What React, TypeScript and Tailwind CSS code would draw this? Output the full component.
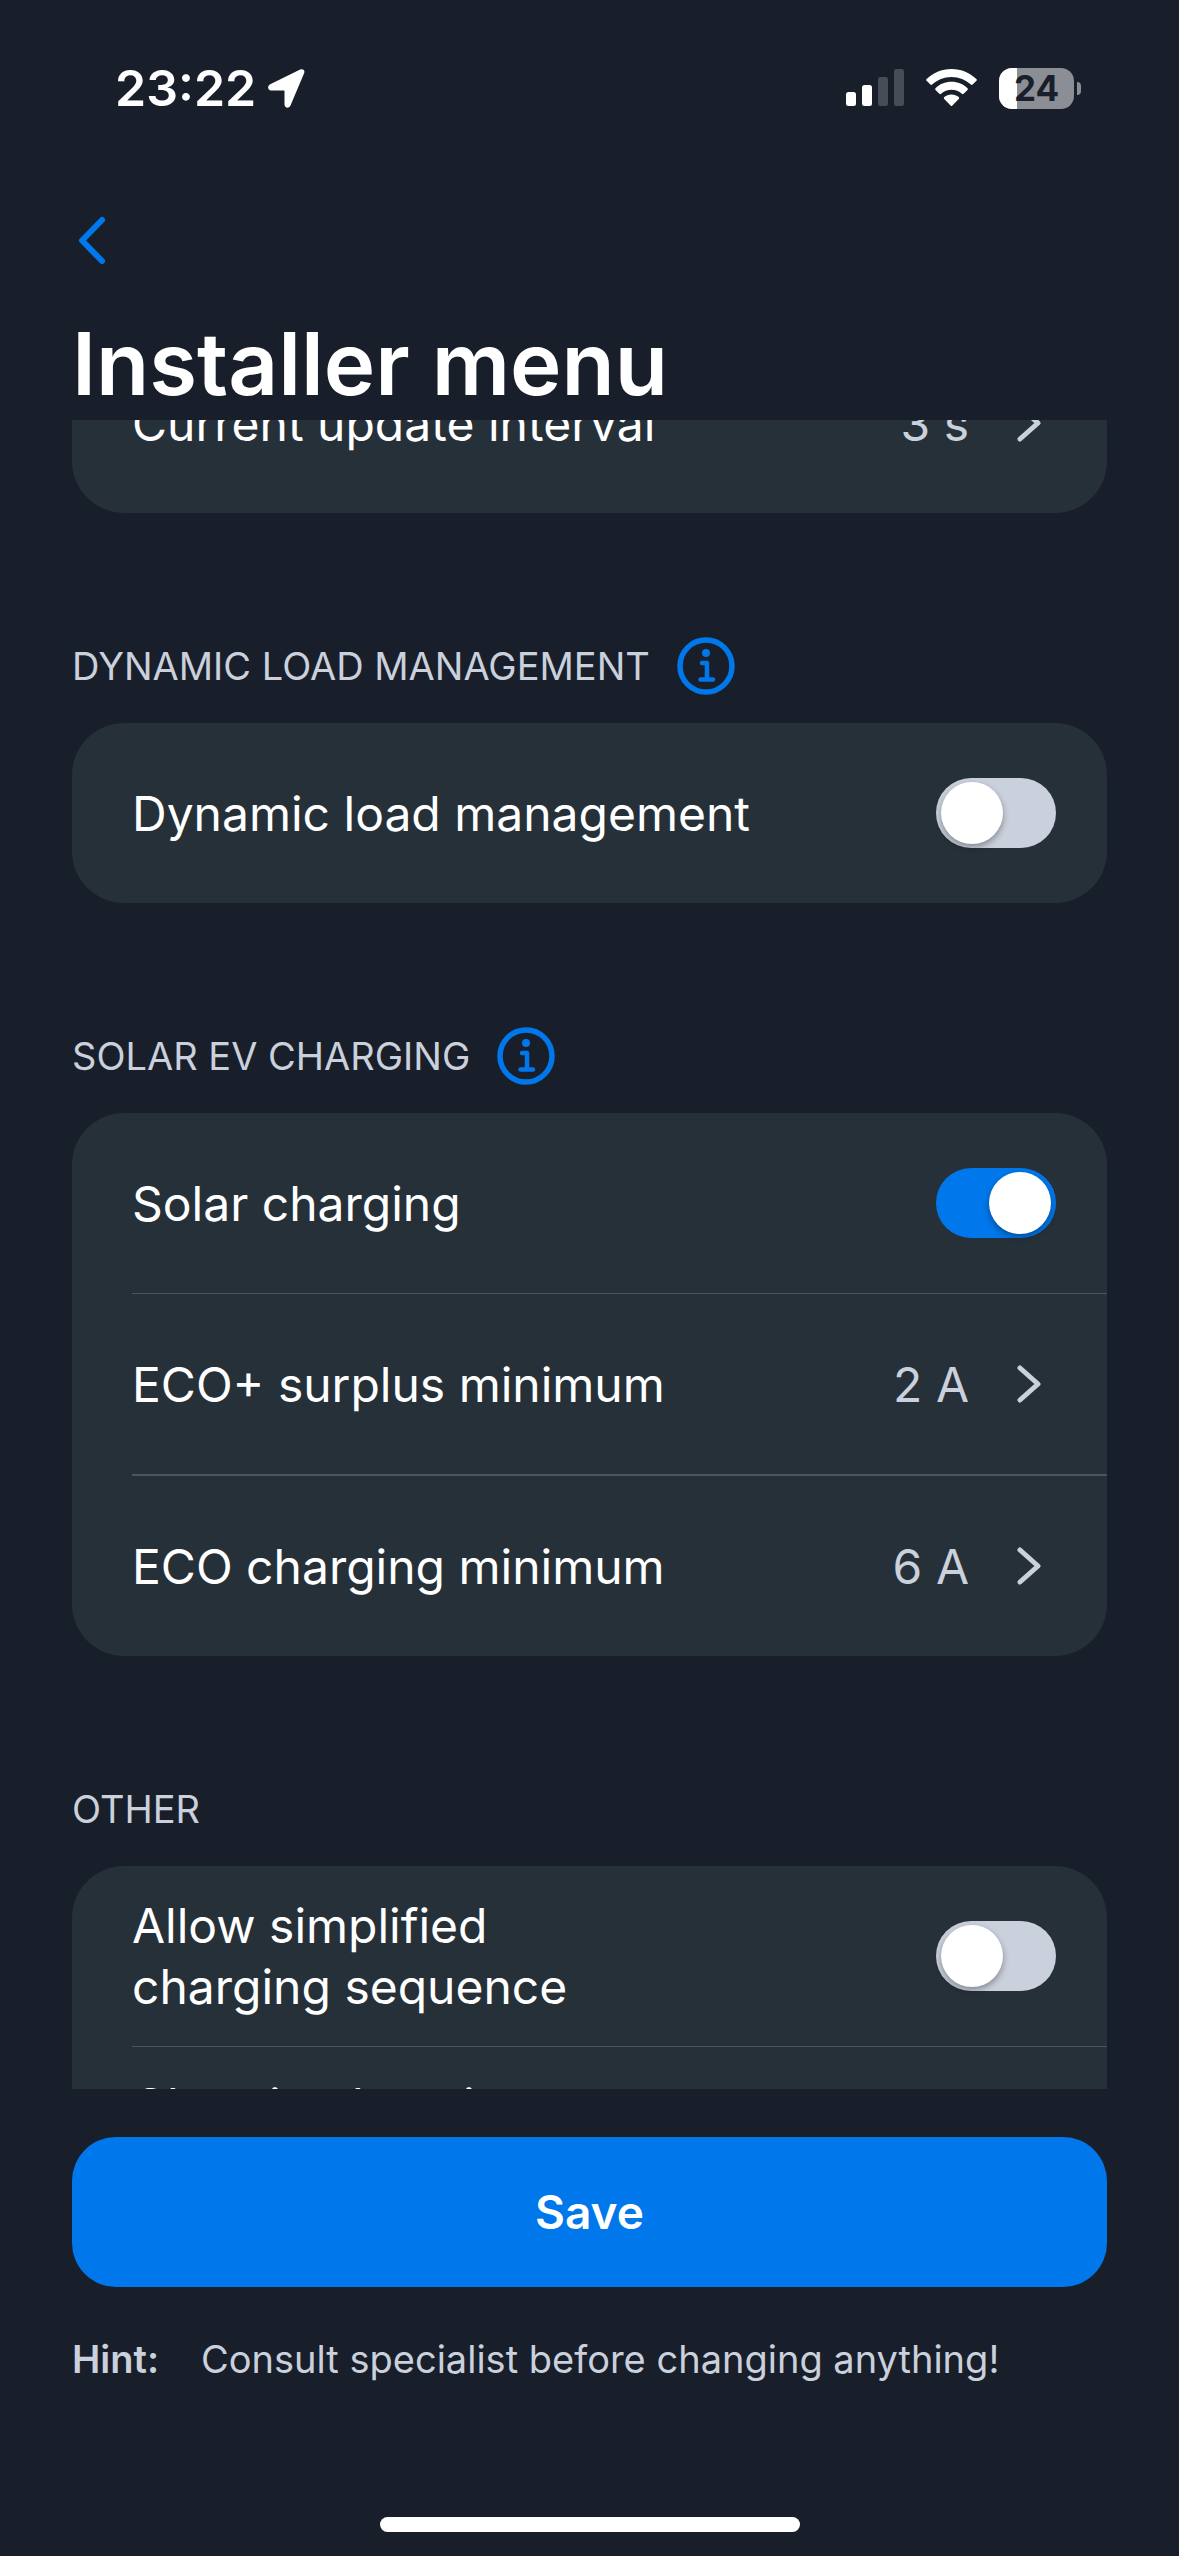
import { useState } from "react";
import type { ReactNode } from "react";

function LocationArrow() {
  return (
    <svg viewBox="0 0 37 39" className="h-[39px] w-[37px] shrink-0" fill="#fff" aria-hidden="true">
      <path d="M2.2 15.3 32.2.5c2.9-1.2 5.1 1 3.9 3.8L22.5 36.6c-1.4 3.3-6 2.6-6-1V22.6c0-.8-.3-1.1-1.1-1.1H3.1C-.3 21.5-1 16.9 2.2 15.3Z" />
    </svg>
  );
}

function SignalBars() {
  return (
    <svg viewBox="0 0 58 38" className="h-[38px] w-[58px] shrink-0" fill="#fff" aria-hidden="true">
      <rect x="0" y="23" width="10" height="14" rx="2.5" />
      <rect x="16" y="16" width="10" height="21" rx="2.5" />
      <rect x="32" y="8" width="10" height="29" rx="2.5" fill="#474d56" />
      <rect x="48" y="0" width="10" height="37" rx="2.5" fill="#474d56" />
    </svg>
  );
}

function WifiIcon() {
  return (
    <svg viewBox="0 0 51 38" className="h-[38px] w-[51px] shrink-0" fill="#fff" aria-hidden="true">
      <path d="M25.5 0C35.4 0 44.2 3.9 50.4 10.1a1.2 1.2 0 0 1 0 1.7L46.6 15.6a1.2 1.2 0 0 1-1.7 0C39.9 10.8 33 7.9 25.5 7.9S11.1 10.8 6.1 15.6a1.2 1.2 0 0 1-1.7 0L.6 11.8a1.2 1.2 0 0 1 0-1.7C6.8 3.9 15.6 0 25.5 0Z" />
      <path d="M25.5 12.8c6.3 0 12 2.4 16 6.4a1.2 1.2 0 0 1 0 1.7l-3.9 3.9a1.2 1.2 0 0 1-1.7 0c-2.8-2.5-6.4-4-10.4-4s-7.6 1.5-10.4 4a1.2 1.2 0 0 1-1.7 0l-3.9-3.9a1.2 1.2 0 0 1 0-1.7c4-4 9.7-6.4 16-6.4Z" />
      <path d="M25.5 25.5c2.8 0 5.2 1 7.2 2.6a1.3 1.3 0 0 1 .1 1.9l-6.4 6.6a1.2 1.2 0 0 1-1.8 0L18.2 30a1.3 1.3 0 0 1 .1-1.9c2-1.6 4.4-2.6 7.2-2.6Z" />
    </svg>
  );
}

function Battery({ level }: { level: number }) {
  return (
    <div className="flex items-center gap-[3px]">
      <div className="relative flex h-[41px] w-[75px] items-center justify-center overflow-hidden rounded-[13px] bg-[#8b8f95]">
        <div className="absolute inset-y-0 left-0 bg-white" style={{ width: `${level}%` }} />
        <span className="relative text-[35px] leading-[41px] font-bold text-[#181f2a]">{level}</span>
      </div>
      <div className="h-[13px] w-1 rounded-r-full bg-[#8b8f95]" />
    </div>
  );
}

function StatusBar() {
  return (
    <div className="flex h-[176px] shrink-0 items-start justify-between pt-[57px] pr-[98px] pl-[115px]">
      <div className="flex items-center gap-3">
        <span className="text-[50px] leading-[62px] font-semibold">23:22</span>
        <LocationArrow />
      </div>
      <div className="flex h-[62px] items-center gap-[22px]">
        <SignalBars />
        <WifiIcon />
        <Battery level={24} />
      </div>
    </div>
  );
}

function InfoIcon() {
  return (
    <svg viewBox="0 0 58 58" className="size-[58px]" fill="none" stroke="#0077eb" aria-hidden="true">
      <circle cx="29" cy="29" r="26" strokeWidth="5.5" />
      <circle cx="29" cy="16" r="4" fill="#0077eb" stroke="none" />
      <path d="M25 26h5v16.5M23.5 42.5h12.5" strokeWidth="4.5" strokeLinecap="round" strokeLinejoin="round" />
    </svg>
  );
}

function SectionHeading({ title, info }: { title: string; info?: boolean }) {
  return (
    <div className="flex items-center gap-[27px] pb-7">
      <h2 className="text-[38px] leading-[58px] text-[#cad0dc]">{title}</h2>
      {info && (
        <button type="button" aria-label={`About ${title.toLowerCase()}`}>
          <InfoIcon />
        </button>
      )}
    </div>
  );
}

function ToggleRow({ id, label, initial = false }: { id: string; label: string; initial?: boolean }) {
  const [on, setOn] = useState(initial);
  return (
    <div className="ml-[60px] flex h-[180px] items-center justify-between pr-[51px]">
      <label htmlFor={id} className="text-[48px] leading-[61px] whitespace-pre-line">
        {label}
      </label>
      <input
        id={id}
        type="checkbox"
        role="switch"
        checked={on}
        onChange={(e) => setOn(e.target.checked)}
        className="h-[70px] w-[120px] shrink-0 cursor-pointer appearance-none rounded-full bg-[#cad0dc] p-1 pl-[5px] before:block before:size-[62px] before:rounded-full before:bg-white before:shadow-[0_3px_6px_rgba(0,0,0,0.35)] checked:bg-[#0077eb] checked:pl-[53px]"
      />
    </div>
  );
}

function ValueRow({ label, value }: { label: string; value: string }) {
  return (
    <button
      type="button"
      className="ml-[60px] flex h-[180px] items-center justify-between pr-[66px] text-left text-[48px] leading-[61px]"
    >
      <span>{label}</span>
      <span className="flex items-center gap-12 text-[#cad0dc]">
        {value}
        <svg
          viewBox="0 0 24 38"
          className="h-[38px] w-6"
          fill="none"
          stroke="#cad0dc"
          strokeWidth="5"
          strokeLinecap="round"
          strokeLinejoin="round"
          aria-hidden="true"
        >
          <path d="M3 3l18 16L3 35" />
        </svg>
      </span>
    </button>
  );
}

function Card({ children }: { children: ReactNode }) {
  return <div className="flex flex-col rounded-[52px] bg-[#263039]">{children}</div>;
}

export default function App() {
  return (
    <div className="flex h-screen flex-col bg-[#181f2a] font-[Inter,sans-serif] text-white">
      <StatusBar />
      <header className="flex h-[244px] shrink-0 flex-col items-start px-[72px]">
        <button type="button" aria-label="Back" className="flex h-[132px] items-center pl-1.5">
          <svg
            viewBox="0 0 28 50"
            className="h-[50px] w-7"
            fill="none"
            stroke="#0077eb"
            strokeWidth="6"
            strokeLinecap="round"
            strokeLinejoin="round"
            aria-hidden="true"
          >
            <path d="M24 5 4 25.500l20 20.500" />
          </svg>
        </button>
        <h1 className="pt-1 text-[87px] leading-[112px] font-semibold">Installer menu</h1>
      </header>

      <main className="flex min-h-0 flex-1 flex-col overflow-hidden px-[72px]">
        <div className="-mt-[87px] flex shrink-0 flex-col">
          <Card>
            <ValueRow label="Current update interval" value="3 s" />
          </Card>

          <section className="pt-[124px]">
            <SectionHeading title="DYNAMIC LOAD MANAGEMENT" info />
            <Card>
              <ToggleRow id="dynamic-load" label="Dynamic load management" />
            </Card>
          </section>

          <section className="pt-[124px]">
            <SectionHeading title="SOLAR EV CHARGING" info />
            <Card>
              <ToggleRow id="solar-charging" label="Solar charging" initial />
              <div className="ml-[60px] h-px bg-[#485661]" />
              <ValueRow label="ECO+ surplus minimum" value="2 A" />
              <div className="ml-[60px] h-0.5 bg-[#485661]" />
              <ValueRow label="ECO charging minimum" value="6 A" />
            </Card>
          </section>

          <section className="pt-[124px]">
            <SectionHeading title="OTHER" />
            <Card>
              <ToggleRow id="simplified" label={"Allow simplified\ncharging sequence"} />
              <div className="ml-[60px] h-px bg-[#485661]" />
              <button
                type="button"
                className="ml-[60px] flex h-[180px] items-start pt-7 text-left text-[48px] leading-[61px]"
              >
                Charging location
              </button>
            </Card>
          </section>
        </div>
      </main>

      <footer className="flex shrink-0 flex-col px-[72px] pt-12">
        <button type="button" className="h-[150px] rounded-[44px] bg-[#0077eb] text-[46px] font-semibold">
          Save
        </button>
        <p className="flex gap-[42px] pt-12 text-[38px] leading-[48px] text-[#cad0dc]">
          <strong className="font-semibold">Hint:</strong>
          <span>Consult specialist before changing anything!</span>
        </p>
        <div className="mt-[134px] mb-6 h-[15px] w-[420px] self-center rounded-full bg-white" />
      </footer>
    </div>
  );
}
